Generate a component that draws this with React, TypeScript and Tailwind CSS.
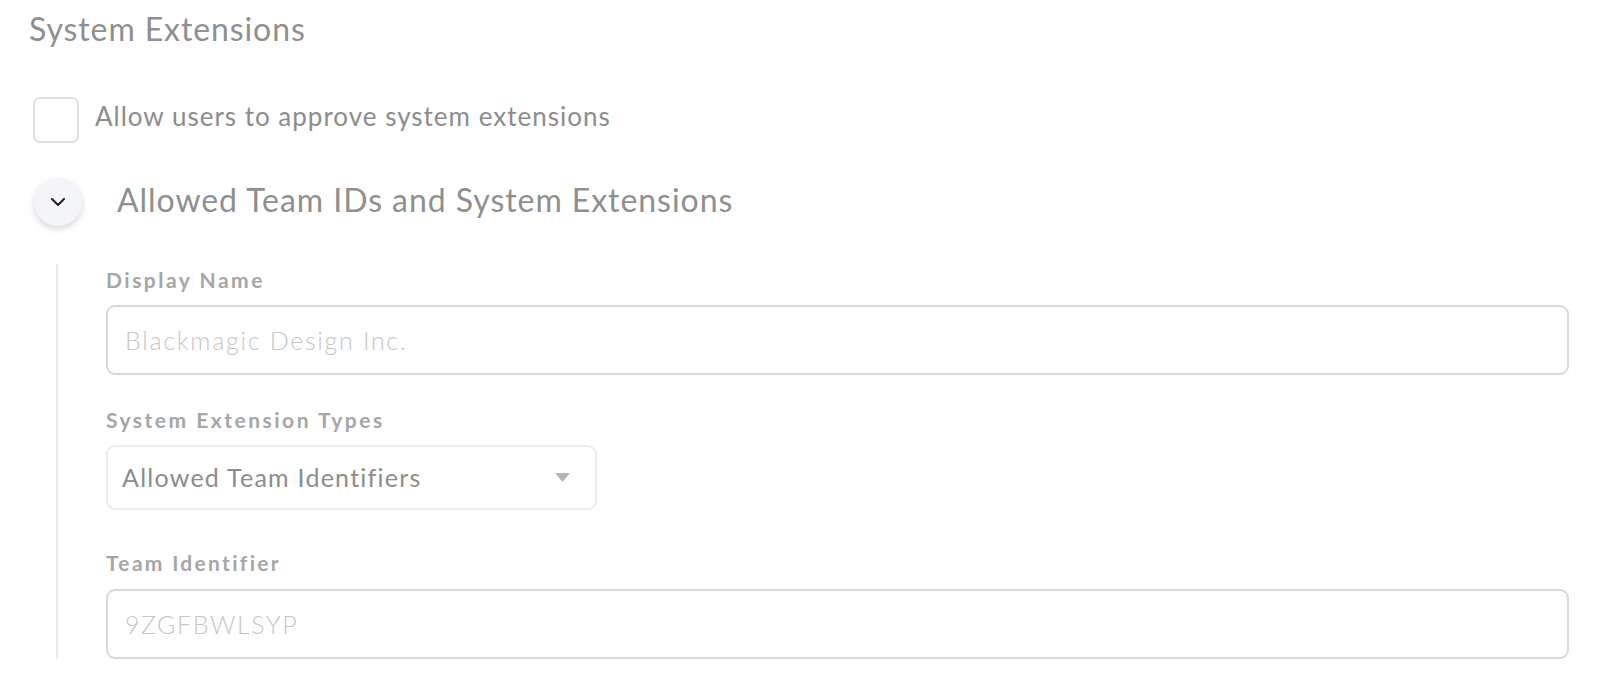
import React from "react";

export default function App() {
  const font = { fontFamily: "Lato, 'Open Sans', sans-serif" };
  return (
    <div className="w-[1602px] h-[694px] bg-white overflow-hidden" style={font}>
      <div className="flex flex-col pl-[29px] pr-[33px]">
        <div className="h-[58px] flex items-center">
          <span className="text-[32px] tracking-[0.9px] text-[#8f8f8f] leading-none">System Extensions</span>
        </div>
        <div className="mt-[39px] h-[46px] flex items-center">
          <div className="ml-[4px] w-[46px] h-[46px] rounded-[7px] border-2 border-[#e0e0e0] bg-white" />
          <span className="ml-[16px] mb-[8px] text-[26px] tracking-[1px] text-[#8c8c8c] leading-none">
            Allow users to approve system extensions
          </span>
        </div>
        <div className="mt-[35px] h-[48px] flex items-center">
          <button className="ml-[5px] w-[48px] h-[48px] rounded-full bg-[#f4f5f8] shadow-[0_3px_6px_rgba(0,0,0,0.16)] flex items-center justify-center">
            <svg width="14" height="8" viewBox="0 0 14 8" fill="none">
              <polyline points="1,1 7,7 13,1" stroke="#222" strokeWidth="2" strokeLinecap="round" strokeLinejoin="round" />
            </svg>
          </button>
          <span className="ml-[35px] mb-[4px] text-[32px] tracking-[0.95px] text-[#8f8f8f] leading-none">
            Allowed Team IDs and System Extensions
          </span>
        </div>
        <div className="mt-[38px] ml-[27px] border-l-2 border-[#ebebef] pl-[48px] flex flex-col">
          <div className="h-[30px] flex items-center">
            <span className="text-[21px] tracking-[2.5px] font-bold text-[#a6a6a6] leading-none">Display Name</span>
          </div>
          <div className="mt-[11px] h-[70px] rounded-[9px] border-2 border-[#d9d9d9] flex items-center pl-[17px]">
            <span className="text-[25px] tracking-[1.7px] font-light text-[#c6c6c6] leading-none">Blackmagic Design Inc.</span>
          </div>
          <div className="mt-[29px] h-[30px] flex items-center">
            <span className="text-[21px] tracking-[2.5px] font-bold text-[#a6a6a6] leading-none">System Extension Types</span>
          </div>
          <div className="mt-[11px] w-[491px] h-[65px] rounded-[9px] border-2 border-[#ededed] flex items-center pl-[14px] pr-[25px] justify-between">
            <span className="text-[25px] tracking-[1.25px] text-[#8c8c8c] leading-none">Allowed Team Identifiers</span>
            <svg width="15" height="9" viewBox="0 0 15 9">
              <polygon points="0,0 15,0 7.5,9" fill="#b4b6be" />
            </svg>
          </div>
          <div className="mt-[37px] h-[30px] flex items-center">
            <span className="text-[21px] tracking-[2.3px] font-bold text-[#a6a6a6] leading-none">Team Identifier</span>
          </div>
          <div className="mt-[12px] h-[70px] rounded-[9px] border-2 border-[#d9d9d9] flex items-center pl-[17px]">
            <span className="text-[25px] tracking-[1.55px] font-light text-[#c6c6c6] leading-none">9ZGFBWLSYP</span>
          </div>
        </div>
      </div>
    </div>
  );
}
